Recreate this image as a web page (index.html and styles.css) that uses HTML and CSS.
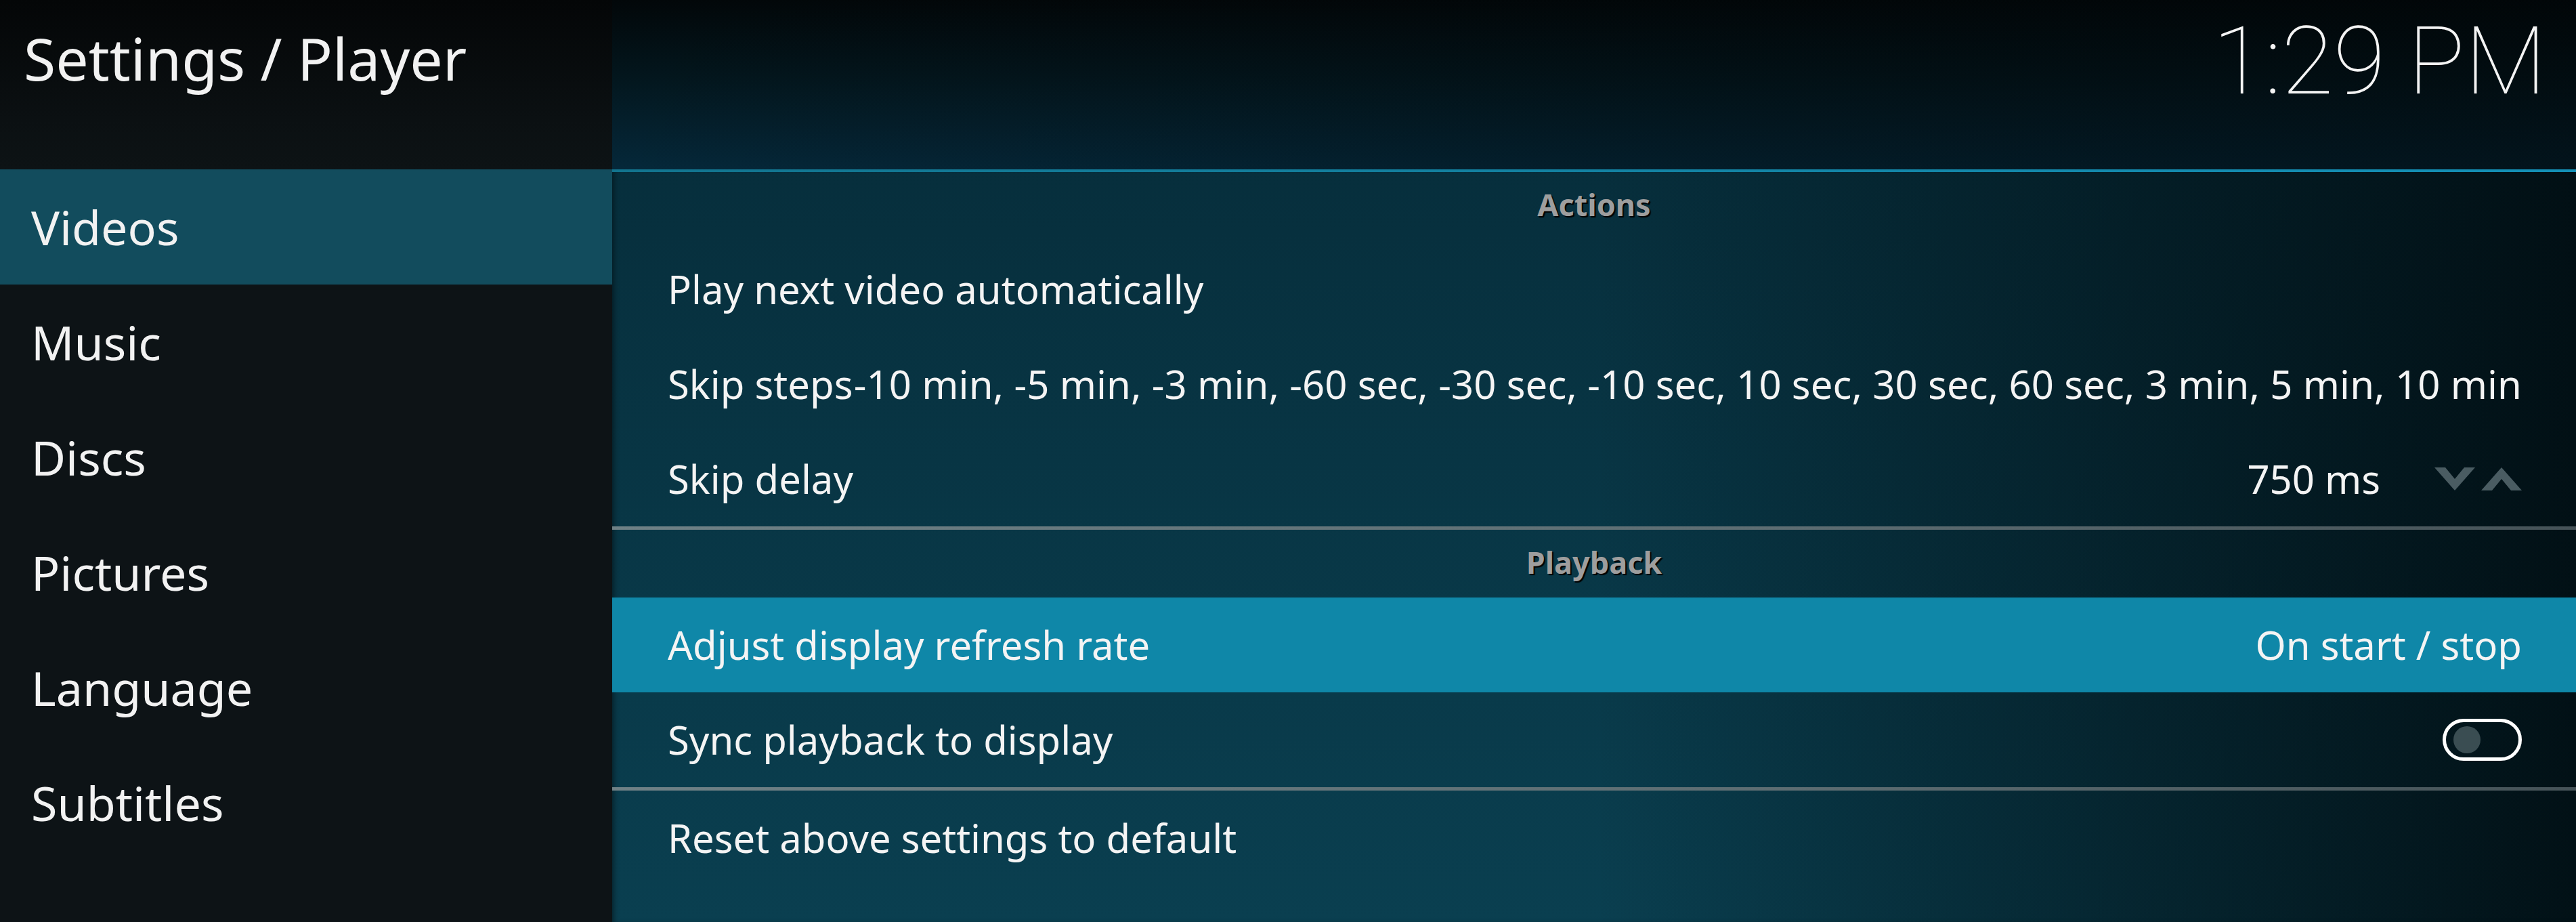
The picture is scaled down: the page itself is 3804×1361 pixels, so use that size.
FILE: index.html
```html
<!DOCTYPE html>
<html lang="en">
<head>
<meta charset="utf-8">
<title>Settings / Player</title>
<link rel="stylesheet" href="styles.css">
</head>
<body>
<div class="app">
  <aside class="sidebar">
    <header class="side-head">
      <h1 class="title">Settings / Player</h1>
    </header>
    <nav class="menu">
      <div class="menu-item active">Videos</div>
      <div class="menu-item">Music</div>
      <div class="menu-item">Discs</div>
      <div class="menu-item">Pictures</div>
      <div class="menu-item">Language</div>
      <div class="menu-item">Subtitles</div>
    </nav>
  </aside>
  <main class="main">
    <header class="main-head">
      <div class="clock">1:29 PM</div>
    </header>
    <div class="topline"></div>
    <section class="list">
      <div class="group-title first">Actions</div>
      <div class="row"><span class="label">Play next video automatically</span></div>
      <div class="row"><span class="label">Skip steps</span><span class="value long">-10 min, -5 min, -3 min, -60 sec, -30 sec, -10 sec, 10 sec, 30 sec, 60 sec, 3 min, 5 min, 10 min</span></div>
      <div class="row">
        <span class="label">Skip delay</span>
        <span class="value">750 ms</span>
        <span class="spinner">
          <svg class="arrow" width="60" height="34" viewBox="0 0 60 34"><polygon points="0,0 16,0 30,17 44,0 60,0 30,34" fill="#4a5c62"/></svg>
          <svg class="arrow" width="60" height="34" viewBox="0 0 60 34"><polygon points="0,34 16,34 30,17 44,34 60,34 30,0" fill="#4a5c62"/></svg>
        </span>
      </div>
      <div class="sep"></div>
      <div class="group-title">Playback</div>
      <div class="row selected"><span class="label">Adjust display refresh rate</span><span class="value">On start / stop</span></div>
      <div class="row"><span class="label">Sync playback to display</span><span class="toggle"><span class="knob"></span></span></div>
      <div class="sep"></div>
      <div class="row"><span class="label">Reset above settings to default</span></div>
    </section>
  </main>
</div>
</body>
</html>
```
FILE: styles.css
```css
html, body {
  margin: 0;
  padding: 0;
}
body {
  width: 3804px;
  height: 1361px;
  overflow: hidden;
  background: #0d1316;
  font-family: "Noto Sans", "Open Sans", sans-serif;
  color: #f4f4f4;
}
.app {
  display: grid;
  grid-template-columns: 904px minmax(0, 1fr);
  height: 1361px;
}
.sidebar {
  background: #0d1316;
  display: flex;
  flex-direction: column;
}
.side-head {
  height: 250px;
  background: linear-gradient(180deg, #040607 0%, #0b1012 70%, #0d1315 100%);
  box-sizing: border-box;
  padding: 43px 0 0 35px;
}
.title {
  margin: 0;
  font-weight: 400;
  font-size: 86px;
  line-height: 1;
  color: #f2f2f2;
}
.menu {
  display: flex;
  flex-direction: column;
}
.menu-item {
  height: 170px;
  display: flex;
  align-items: center;
  padding-left: 46px;
  font-size: 70px;
  line-height: 1;
  color: #f2f2f2;
}
.menu-item.active {
  background: #124c5d;
}
.main {
  min-width: 0;
  display: flex;
  flex-direction: column;
  background:
    linear-gradient(90deg, rgba(1, 10, 14, 0) 0%, rgba(1, 10, 14, 0) 50%, rgba(1, 12, 16, 0.9) 100%),
    linear-gradient(180deg, #062b38 0%, #0a3f50 100%);
  box-shadow: inset 6px 0 8px -4px rgba(0, 0, 0, 0.5);
}
.main-head {
  height: 250px;
  box-sizing: border-box;
  display: flex;
  justify-content: flex-end;
  padding: 20px 44px 0 0;
  background:
    linear-gradient(90deg, rgba(1, 6, 8, 0) 0%, rgba(1, 6, 8, 0.6) 100%),
    linear-gradient(180deg, #020709 0%, #03161d 45%, #05283a 100%);
}
.clock {
  font-family: "Roboto", "Noto Sans", sans-serif;
  font-weight: 100;
  font-size: 140px;
  line-height: 1;
  color: #f4f4f4;
}
.topline {
  height: 4px;
  background: linear-gradient(90deg, #12748e 0%, #1490b6 100%);
}
.list {
  display: flex;
  flex-direction: column;
  padding-top: 3px;
}
.group-title {
  height: 100px;
  box-sizing: border-box;
  padding-bottom: 6px;
  display: flex;
  align-items: center;
  justify-content: center;
  font-weight: 700;
  font-size: 45px;
  line-height: 1;
  color: #9e9e9e;
  text-shadow: 2px 2px 1px #000;
}
.group-title.first {
  padding-bottom: 12px;
}
.row {
  height: 140px;
  display: flex;
  align-items: center;
  padding: 0 80px 0 82px;
  font-size: 58px;
  line-height: 1;
  white-space: nowrap;
  min-width: 0;
}
.row.selected {
  background: #0f87a8;
}
.label {
  flex: 0 0 auto;
}
.value {
  margin-left: auto;
}
.value.long {
  letter-spacing: 0.1px;
}
.spinner {
  display: flex;
  align-items: center;
  gap: 9px;
  margin-left: 80px;
}
.arrow {
  display: block;
}
.toggle {
  margin-left: auto;
  width: 117px;
  height: 62px;
  box-sizing: border-box;
  border: 5px solid #ffffff;
  border-radius: 31px;
  display: flex;
  align-items: center;
  padding-left: 11px;
}
.knob {
  width: 40px;
  height: 40px;
  border-radius: 50%;
  background: #3a4d52;
}
.sep {
  height: 5px;
  background: linear-gradient(90deg, #6f8186 0%, #5d6d72 60%, #465358 100%);
}
```
